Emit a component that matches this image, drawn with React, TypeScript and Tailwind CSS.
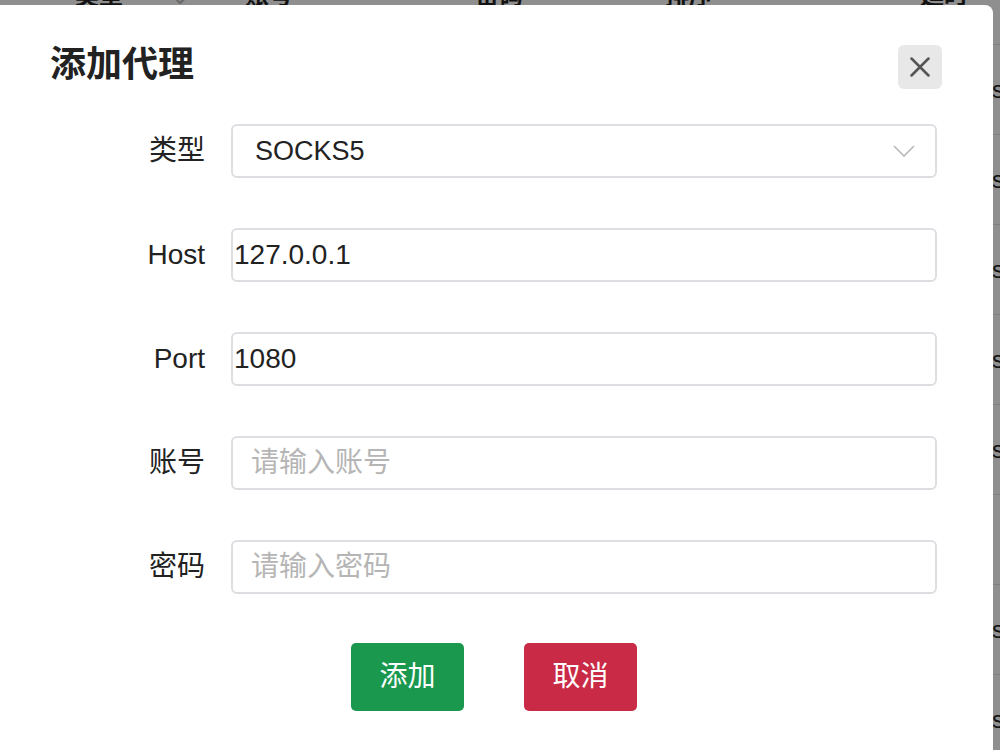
import { X } from "lucide-react";

const rows = ["120ms", "98ms", "210ms", "87ms", "64ms", "", "156ms", "301ms"];

function Field({ label, children }: { label: string; children: React.ReactNode }) {
  return (
    <div className="flex items-center">
      <label className="w-[238px] shrink-0 pr-[26px] text-right text-[28px] leading-[36px] text-[#222]">{label}</label>
      <div className="flex-1 h-[54px] border-2 border-[#dedee2] rounded-[6px] flex items-center">{children}</div>
    </div>
  );
}

export default function App() {
  return (
    <div
      className="relative w-[1000px] h-[750px] overflow-hidden bg-white"
      style={{ fontFamily: '"Liberation Sans", "Noto Sans CJK SC", sans-serif' }}
    >
      {/* Background table */}
      <div className="w-[1000px] text-[24px] text-[#222]">
        <div className="flex items-end h-[65px] -mt-[20px] pb-[33px] border-b border-[#e5e5e5] font-bold leading-[30px]">
          <div className="w-[170px] pl-[75px]">类型</div>
          <div className="w-[75px] text-[#bbb] font-normal">⌄</div>
          <div className="w-[230px]">账号</div>
          <div className="w-[190px]">密码</div>
          <div className="w-[255px]">排序</div>
          <div className="flex-1">延时</div>
        </div>
        {rows.map((r, i) => (
          <div key={i} className="flex items-center justify-end h-[90px] border-b border-[#e5e5e5] -mr-[4px]">
            <span>{r}</span>
          </div>
        ))}
      </div>

      {/* Overlay */}
      <div className="absolute inset-0 bg-black/[0.44]" />

      {/* Modal */}
      <div className="absolute left-[-7px] top-[5px] w-[1000px] h-[800px] bg-white rounded-[8px]">
        <div className="flex items-start justify-between pl-[57px] pr-[51px] pt-[40px]">
          <h2 className="text-[36px] font-bold text-[#222] leading-[44px] -mt-[2px]">添加代理</h2>
          <button className="w-[44px] h-[44px] rounded-[6px] bg-[#e8e8e8] flex items-center justify-center text-[#555]">
            <X size={34} strokeWidth={1.8} />
          </button>
        </div>

        <div className="flex flex-col gap-[50px] mt-[35px] pr-[56px]">
          <Field label="类型">
            <div className="flex-1 flex items-center justify-between pl-[22px] pr-[20px]">
              <span className="text-[27px] text-[#222]">SOCKS5</span>
              <svg width="22" height="12" viewBox="0 0 22 12" fill="none">
                <polyline points="1,1 11,11 21,1" stroke="#b8b8b8" strokeWidth="1.6" />
              </svg>
            </div>
          </Field>
          <Field label="Host">
            <span className="pl-[1px] text-[28px] text-[#222]">127.0.0.1</span>
          </Field>
          <Field label="Port">
            <span className="pl-[1px] text-[28px] text-[#222]">1080</span>
          </Field>
          <Field label="账号">
            <span className="pl-[18px] text-[28px] text-[#b5b5b5]">请输入账号</span>
          </Field>
          <Field label="密码">
            <span className="pl-[18px] text-[28px] text-[#b5b5b5]">请输入密码</span>
          </Field>
        </div>

        <div className="flex gap-[60px] pl-[358px] mt-[49px]">
          <button className="w-[113px] h-[68px] rounded-[5px] bg-[#1a984e] text-white text-[28px]">添加</button>
          <button className="w-[113px] h-[68px] rounded-[5px] bg-[#c92a45] text-white text-[28px]">取消</button>
        </div>
      </div>
    </div>
  );
}
